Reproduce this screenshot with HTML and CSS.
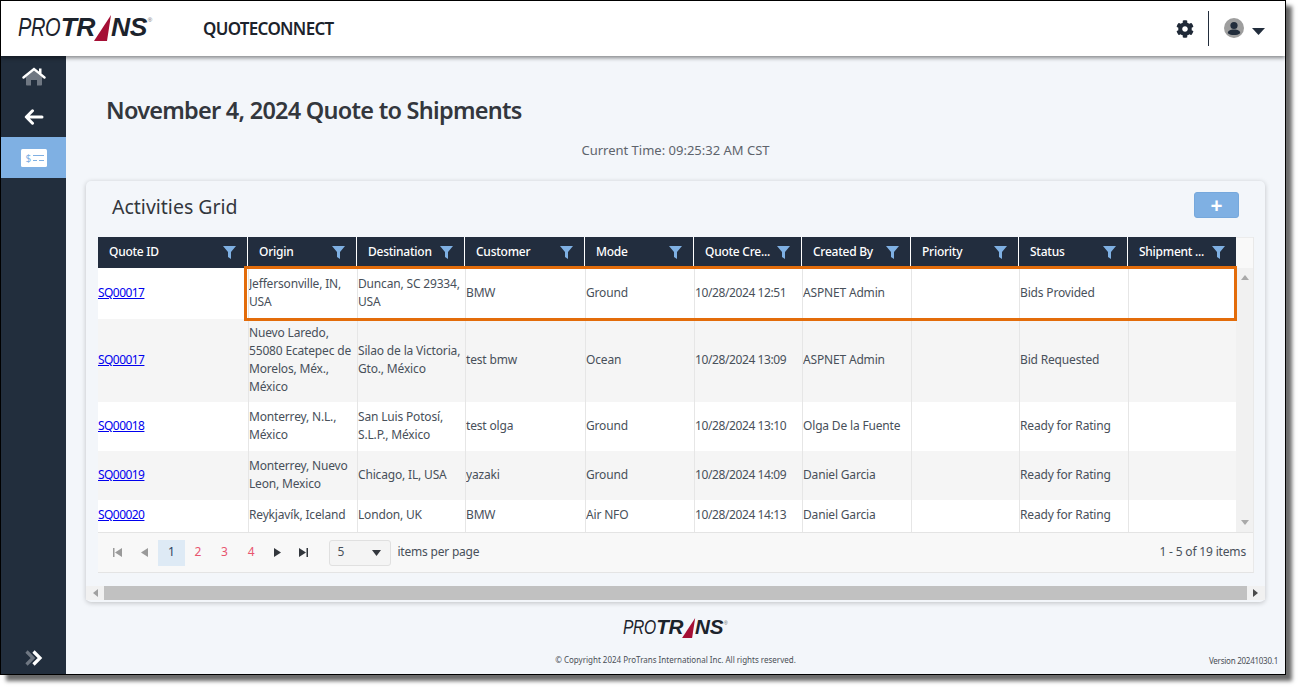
FILE: index.html
```html
<!DOCTYPE html>
<html lang="en">
<head>
<meta charset="utf-8">
<title>QuoteConnect</title>
<link rel="stylesheet" href="styles.css">
</head>
<body>
<div class="window">
  <header class="topbar">
    <div class="logo logo-lg"><span class="logo-thin">PRO</span><span class="logo-bold">TR</span><svg class="logo-wedge" viewBox="0 0 18 26"><polygon points="0,26 17,0 13,26" fill="#a50f35"/></svg><span class="logo-bold">NS</span><sup class="logo-reg">®</sup></div>
    <div class="app-name">QUOTECONNECT</div>
    <div class="top-actions">
      <svg class="gear" viewBox="0 0 512 512"><path fill="#1f2937" d="M487.4 315.7l-42.6-24.6c4.3-23.2 4.3-47 0-70.2l42.6-24.6c4.9-2.8 7.1-8.6 5.5-14-11.1-35.6-30-67.8-54.7-94.6-3.8-4.1-10-5.1-14.8-2.3L380.8 110c-17.9-15.4-38.5-27.3-60.8-35.1V25.8c0-5.6-3.9-10.5-9.4-11.7-36.7-8.2-74.3-7.8-109.2 0-5.5 1.2-9.4 6.1-9.4 11.7V75c-22.2 7.9-42.8 19.8-60.8 35.1L88.7 85.5c-4.9-2.8-11-1.9-14.8 2.3-24.7 26.7-43.6 58.9-54.7 94.6-1.7 5.4.6 11.2 5.5 14L67.3 221c-4.3 23.2-4.3 47 0 70.2l-42.6 24.6c-4.9 2.8-7.1 8.6-5.5 14 11.1 35.6 30 67.8 54.7 94.6 3.8 4.1 10 5.1 14.8 2.3l42.6-24.6c17.9 15.4 38.5 27.3 60.8 35.1v49.2c0 5.6 3.9 10.5 9.4 11.7 36.7 8.2 74.3 7.8 109.2 0 5.5-1.2 9.4-6.1 9.4-11.7v-49.2c22.2-7.9 42.8-19.8 60.8-35.1l42.6 24.6c4.9 2.8 11 1.9 14.8-2.3 24.7-26.7 43.6-58.9 54.7-94.6 1.5-5.5-.7-11.3-5.6-14.1zM256 336c-44.1 0-80-35.9-80-80s35.9-80 80-80 80 35.9 80 80-35.9 80-80 80z"/></svg>
      <span class="divider"></span>
      <svg class="avatar" viewBox="0 0 20 20"><circle cx="10" cy="10" r="10" fill="#9e9e9e"/><circle cx="10" cy="7.5" r="3.6" fill="#222d3c"/><path fill="#222d3c" d="M3.8 15.2c0-2.4 2.4-3.6 6.2-3.6s6.2 1.2 6.2 3.6c-1.5 1.2-3.8 1.9-6.2 1.9s-4.7-.7-6.2-1.9z"/></svg>
      <svg class="caret" viewBox="0 0 13 7"><polygon points="0,0 13,0 6.5,7" fill="#222d3c"/></svg>
    </div>
  </header>
  <div class="body-row">
    <nav class="sidebar">
      <div class="nav-item nav-home">
        <svg class="ico-home" viewBox="0 0 24 19"><path fill="#6f7782" d="M4 10 12 3.6 20 10v7.4c0 .7-.5 1.1-1.100 1.100H15v-5.500H9v5.500H5.100c-.6 0-1.100-.4-1.100-1.100z"/><path fill="none" stroke="#fff" stroke-width="2.400" stroke-linecap="round" d="M1.500 10.500 12 2l10.500 8.500"/><rect x="17" y="1.500" width="2.500" height="5" fill="#fff"/></svg>
      </div>
      <div class="nav-item nav-back">
        <svg class="ico-back" viewBox="0 0 20 16"><path fill="none" stroke="#fff" stroke-width="3" stroke-linecap="round" stroke-linejoin="round" d="M8.500 1.800 2.300 8l6.200 6.200M2.500 8h15.500"/></svg>
      </div>
      <div class="nav-item nav-active">
        <svg class="ico-card" viewBox="0 0 26 18"><rect width="26" height="18" rx="1.500" fill="#fff"/><text x="4.500" y="12.500" class="card-dollar">$</text><path stroke="#7fb0e3" stroke-width="1" fill="none" d="M12 6.500h11M12 11.500h4M18 11.500h5"/></svg>
      </div>
      <div class="nav-spacer"></div>
      <div class="nav-expand">
        <svg class="ico-expand" viewBox="0 0 18 16"><path fill="none" stroke="#6f7782" stroke-width="3.200" d="M1.500 1.500 8 8 1.500 14.500"/><path fill="none" stroke="#fff" stroke-width="3.200" d="M8.500 1.500 15 8 8.500 14.500"/></svg>
      </div>
    </nav>
    <main class="content">
      <h1 class="page-title">November 4, 2024 Quote to Shipments</h1>
      <p class="clock">Current Time: 09:25:32 AM CST</p>
      <section class="card">
        <div class="card-head">
          <h2 class="card-title">Activities Grid</h2>
          <button class="add-btn" type="button">+</button>
        </div>
        <div class="grid">
          <div class="grid-main">
            <table class="data">
              <colgroup>
                <col class="c1"><col class="c2"><col class="c3"><col class="c4"><col class="c5"><col class="c6"><col class="c7"><col class="c8"><col class="c9"><col class="c10">
              </colgroup>
              <thead>
                <tr>
                  <th><div class="th-in"><span>Quote ID</span><svg class="funnel" viewBox="0 0 13 13"><path d="M0 0h13L8 6v7L5 11V6z"/></svg></div></th>
                  <th><div class="th-in"><span>Origin</span><svg class="funnel" viewBox="0 0 13 13"><path d="M0 0h13L8 6v7L5 11V6z"/></svg></div></th>
                  <th><div class="th-in"><span>Destination</span><svg class="funnel" viewBox="0 0 13 13"><path d="M0 0h13L8 6v7L5 11V6z"/></svg></div></th>
                  <th><div class="th-in"><span>Customer</span><svg class="funnel" viewBox="0 0 13 13"><path d="M0 0h13L8 6v7L5 11V6z"/></svg></div></th>
                  <th><div class="th-in"><span>Mode</span><svg class="funnel" viewBox="0 0 13 13"><path d="M0 0h13L8 6v7L5 11V6z"/></svg></div></th>
                  <th><div class="th-in"><span>Quote Cre...</span><svg class="funnel" viewBox="0 0 13 13"><path d="M0 0h13L8 6v7L5 11V6z"/></svg></div></th>
                  <th><div class="th-in"><span>Created By</span><svg class="funnel" viewBox="0 0 13 13"><path d="M0 0h13L8 6v7L5 11V6z"/></svg></div></th>
                  <th><div class="th-in"><span>Priority</span><svg class="funnel" viewBox="0 0 13 13"><path d="M0 0h13L8 6v7L5 11V6z"/></svg></div></th>
                  <th><div class="th-in"><span>Status</span><svg class="funnel" viewBox="0 0 13 13"><path d="M0 0h13L8 6v7L5 11V6z"/></svg></div></th>
                  <th><div class="th-in"><span>Shipment ...</span><svg class="funnel" viewBox="0 0 13 13"><path d="M0 0h13L8 6v7L5 11V6z"/></svg></div></th>
                </tr>
              </thead>
              <tbody>
                <tr class="r1">
                  <td><a href="#">SQ00017</a></td><td>Jeffersonville, IN, USA</td><td>Duncan, SC 29334, USA</td><td>BMW</td><td>Ground</td><td class="num">10/28/2024 12:51</td><td>ASPNET Admin</td><td></td><td>Bids Provided</td><td></td>
                </tr>
                <tr class="r2 alt">
                  <td><a href="#">SQ00017</a></td><td>Nuevo Laredo, 55080 Ecatepec de Morelos, Méx., México</td><td>Silao de la Victoria, Gto., México</td><td>test bmw</td><td>Ocean</td><td class="num">10/28/2024 13:09</td><td>ASPNET Admin</td><td></td><td>Bid Requested</td><td></td>
                </tr>
                <tr class="r3">
                  <td><a href="#">SQ00018</a></td><td>Monterrey, N.L., México</td><td>San Luis Potosí, S.L.P., México</td><td>test olga</td><td>Ground</td><td class="num">10/28/2024 13:10</td><td>Olga De la Fuente</td><td></td><td>Ready for Rating</td><td></td>
                </tr>
                <tr class="r3 alt">
                  <td><a href="#">SQ00019</a></td><td>Monterrey, Nuevo Leon, Mexico</td><td>Chicago, IL, USA</td><td>yazaki</td><td>Ground</td><td class="num">10/28/2024 14:09</td><td>Daniel Garcia</td><td></td><td>Ready for Rating</td><td></td>
                </tr>
                <tr class="r5">
                  <td><a href="#">SQ00020</a></td><td>Reykjavík, Iceland</td><td>London, UK</td><td>BMW</td><td>Air NFO</td><td class="num">10/28/2024 14:13</td><td>Daniel Garcia</td><td></td><td>Ready for Rating</td><td></td>
                </tr>
              </tbody>
            </table>
            <div class="vscroll">
              <div class="vs-gutter"></div>
              <div class="vs-track">
                <svg class="vs-arrow" viewBox="0 0 8 5"><polygon points="4,0 8,5 0,5"/></svg>
                <svg class="vs-arrow" viewBox="0 0 8 5"><polygon points="0,0 8,0 4,5"/></svg>
              </div>
            </div>
          </div>
          <div class="pager">
            <svg class="pg-ico pg-off" viewBox="0 0 9 9"><path d="M0 0h1.500v9H0zM9 0v9L2 4.500z"/></svg>
            <svg class="pg-ico pg-off pg-prev" viewBox="0 0 9 9"><path d="M8 0v9L1 4.500z"/></svg>
            <span class="pg-num pg-cur">1</span>
            <span class="pg-num">2</span>
            <span class="pg-num">3</span>
            <span class="pg-num">4</span>
            <svg class="pg-ico pg-next" viewBox="0 0 9 9"><path d="M1 0v9l7-4.500z"/></svg>
            <svg class="pg-ico pg-last" viewBox="0 0 9 9"><path d="M0 0v9l7-4.500zM7.500 0H9v9H7.500z"/></svg>
            <div class="pg-select"><span>5</span><svg class="pg-sel-caret" viewBox="0 0 9 6"><polygon points="0,0 9,0 4.500,6"/></svg></div>
            <span class="pg-label">items per page</span>
            <span class="pg-info">1 - 5 of 19 items</span>
          </div>
          <div class="highlight"></div>
        </div>
        <div class="hscroll">
          <svg class="hs-arrow hs-left" viewBox="0 0 5 8"><polygon points="5,0 5,8 0,4"/></svg>
          <div class="hs-thumb"></div>
          <svg class="hs-arrow hs-right" viewBox="0 0 5 8"><polygon points="0,0 0,8 5,4"/></svg>
        </div>
      </section>
      <footer class="foot">
        <div class="logo logo-sm"><span class="logo-thin">PRO</span><span class="logo-bold">TR</span><svg class="logo-wedge" viewBox="0 0 18 26"><polygon points="0,26 17,0 13,26" fill="#a50f35"/></svg><span class="logo-bold">NS</span><sup class="logo-reg">®</sup></div>
        <div class="copy">© Copyright 2024 ProTrans International Inc. All rights reserved.</div>
        <div class="version">Version 20241030.1</div>
      </footer>
    </main>
  </div>
</div>
</body>
</html>
```
FILE: styles.css
```css
* { box-sizing: border-box; }
html, body { margin: 0; height: 100%; background: #fff; overflow: hidden; }
body { font-family: "Noto Sans", "Open Sans", sans-serif; color: #3f4650; }

.window {
  width: 1286px;
  height: 675px;
  border: 1px solid #000;
  background: #f3f6fa;
  box-shadow: 6px 6px 4px #6b6b6b;
  display: flex;
  flex-direction: column;
}

/* Top bar */
.topbar {
  height: 55px;
  flex: none;
  background: #fff;
  display: flex;
  align-items: center;
  box-shadow: 0 2px 4px rgba(0,0,0,.45);
  position: relative;
  z-index: 2;
}
.logo { display: flex; align-items: flex-start; font-family: "Liberation Sans", sans-serif; font-style: italic; color: #1c232c; white-space: nowrap; }
.logo-thin { font-weight: 400; display: inline-block; transform-origin: left center; }
.logo-bold { font-weight: 700; font-size: 1.06em; }
.logo-lg { font-size: 25px; line-height: 26px; margin-left: 17px; width: 186px; letter-spacing: -.5px; padding-bottom: 4px; }
.logo-lg .logo-thin { transform: scaleX(.8); margin-right: -10px; }
.logo-lg .logo-wedge { width: 18px; height: 26px; margin: 0 -1px 0 -1px; transform: translateY(1px); flex: none; }
.logo-reg { font-size: 6px; line-height: 8px; margin: 2px 0 0 1px; font-style: normal; letter-spacing: 0; color: #666; }
.app-name { font-size: 17px; font-weight: 600; color: #1c232c; letter-spacing: -.7px; margin-left: -1px; }
.top-actions { margin-left: auto; display: flex; align-items: center; padding-right: 20px; }
.gear { width: 18px; height: 18px; }
.divider { width: 1px; height: 35px; background: #222d3c; margin: 0 15px 0 14px; }
.avatar { width: 20px; height: 20px; margin-top: -2px; }
.caret { width: 13px; height: 7px; margin: 5px 0 0 8px; }

/* Body */
.body-row { flex: 1; display: flex; min-height: 0; }
.sidebar { width: 65px; flex: none; background: #222e3d; display: flex; flex-direction: column; }
.nav-item { display: flex; align-items: center; justify-content: center; }
.nav-home { height: 40px; }
.nav-back { height: 41px; }
.nav-active { height: 41px; background: #7fb0e3; }
.ico-home { width: 24px; height: 19px; }
.ico-back { width: 20px; height: 16px; }
.ico-card { width: 26px; height: 18px; }
.card-dollar { font-size: 10px; fill: #7fb0e3; font-family: "Noto Sans", sans-serif; }
.nav-spacer { flex: 1; }
.nav-expand { height: 24px; display: flex; justify-content: center; align-items: flex-start; }
.ico-expand { width: 18px; height: 16px; }

.content { flex: 1; min-width: 0; padding: 38px 20px 0; position: relative; }
.page-title { margin: 0 0 0 20px; font-size: 23.5px; line-height: 32px; font-weight: 600; letter-spacing: -.75px; color: #33373d; }
.clock { margin: 15px 0 0; font-size: 13px; line-height: 18px; text-align: center; color: #5e646c; }

/* Card */
.card {
  margin-top: 22px;
  height: 421px;
  background: #f3f6fa;
  border-radius: 5px;
  box-shadow: 0 1px 5px rgba(0,0,0,.22);
  padding: 0 11px 0 12px;
}
.card-head { height: 56px; display: flex; align-items: flex-start; justify-content: space-between; padding: 11px 15px 0 14px; }
.card-title { margin: 0; font-size: 19.5px; line-height: 30px; font-weight: 400; color: #33373d; }
.add-btn {
  width: 45px; height: 26px; padding: 0;
  border: 1px solid #76a8dc; border-radius: 3px;
  background: #7fb0e3; color: #fff; font: 700 21px/22px "Noto Sans", sans-serif;
}

/* Grid */
.grid { width: 1156px; position: relative; background: #f8f8f8; border-right: 1px solid #e9e9e9; border-bottom: 1px solid #e4e4e4; }
.grid-main { display: flex; }
.data { width: 1138px; table-layout: fixed; border-collapse: separate; border-spacing: 0; font-size: 12px; line-height: 18px; letter-spacing: -.17px; flex: none; }
.c1 { width: 150px; } .c2 { width: 109px; } .c3 { width: 108px; } .c4 { width: 120px; } .c5 { width: 109px; }
.c6 { width: 108px; } .c7 { width: 109px; } .c8 { width: 108px; } .c9 { width: 109px; } .c10 { width: 108px; }
.data th { height: 31px; background: #222d3e; color: #fff; font-weight: 500; padding: 0 0 2px; border-right: 1px solid #fff; text-align: left; letter-spacing: -.25px; }
.data th:last-child { border-right: 0; }
.th-in { display: flex; justify-content: space-between; align-items: center; padding: 0 11px; white-space: nowrap; }
.funnel { width: 13px; height: 13px; fill: #7fb0e3; flex: none; transform: translateY(1px); }
.data td { padding: 0 0 2px; border-left: 1px solid #e6e6e6; background: #fff; color: #48505a; vertical-align: middle; overflow: hidden; }
.data td:first-child { border-left: 0; }
.data td.num { letter-spacing: -.4px; }
.data tr.alt td { background: #f5f5f5; }
.data td a { color: #0000ee; text-decoration: underline; letter-spacing: -.55px; }
.r1 { height: 51px; } .r2 { height: 83px; } .r3 { height: 49px; } .r5 { height: 32px; }

.vscroll { width: 17px; flex: none; display: flex; flex-direction: column; }
.vs-gutter { height: 31px; background: #f9f9f9; border-top: 1px solid #ececec; }
.vs-track { flex: 1; background: #f1f1f1; display: flex; flex-direction: column; justify-content: space-between; align-items: center; padding: 7px 0; }
.vs-arrow { width: 8px; height: 5px; fill: #a9a9a9; }

.pager { height: 40px; border-top: 1px solid #e4e4e4; display: flex; align-items: center; font-size: 12px; letter-spacing: -.1px; padding-left: 15px; color: #48505a; }
.pg-ico { width: 9px; height: 9px; fill: #33373d; flex: none; }
.pg-off { fill: #9a9a9a; }
.pg-prev { margin-left: 18px; margin-right: 9px; }
.pg-num { width: 26.6px; height: 26px; line-height: 24px; text-align: center; color: #e8556f; flex: none; }
.pg-cur { background: #deeaf5; color: #2a4260; }
.pg-next { margin-left: 9px; }
.pg-last { margin-left: 17px; }
.pg-select { width: 62px; height: 26px; margin-left: 21px; padding: 0 9px 2px 7px; border: 1px solid #e0e0e0; border-radius: 3px; background: #f4f4f4; display: flex; justify-content: space-between; align-items: center; }
.pg-sel-caret { width: 9px; height: 6px; fill: #33373d; transform: translateY(1px); }
.pg-label { margin-left: 6px; padding-bottom: 2px; letter-spacing: -.2px; }
.pg-info { margin-left: auto; padding: 0 7px 2px 0; letter-spacing: -.17px; }

.highlight { position: absolute; left: 146px; top: 29px; width: 993px; height: 55px; border: 3px solid #e36c0a; pointer-events: none; }

.hscroll { height: 14px; margin: 13px -11px 0 -12px; background: #f1f1f1; display: flex; align-items: center; }
.hs-thumb { flex: 1; height: 14px; background: #c1c1c1; margin: 0 6px; }
.hs-arrow { width: 5px; height: 8px; flex: none; }
.hs-left { fill: #a0a0a0; margin-left: 7px; }
.hs-right { fill: #4a4a4a; margin-right: 7px; }

/* Footer */
.foot { position: relative; height: 72px; }
.logo-sm { font-size: 19.5px; line-height: 20px; justify-content: center; letter-spacing: -.4px; padding-top: 15px; }
.logo-sm .logo-thin { transform: scaleX(.8); margin-right: -8px; }
.logo-sm .logo-wedge { width: 14px; height: 20px; margin: 0 -1px 0 -1px; transform: translateY(1px); flex: none; }
.logo-sm .logo-reg { font-size: 5px; }
.copy { margin-top: 17px; text-align: center; font-size: 8px; line-height: 12px; color: #4a4f56; }
.version { position: absolute; right: -13px; bottom: 7px; font-size: 8px; line-height: 12px; letter-spacing: -.25px; color: #4a4f56; }
```
